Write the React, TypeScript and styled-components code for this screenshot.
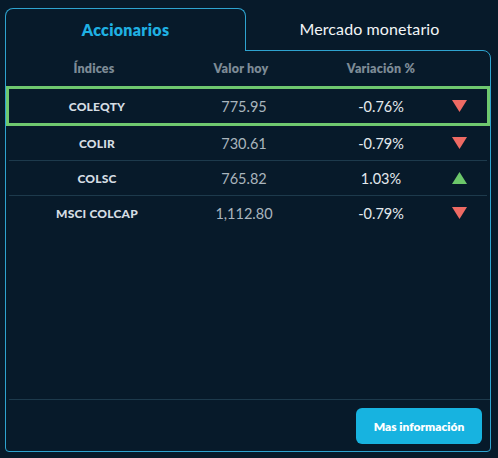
import React, { useState } from "react";
import styled, { createGlobalStyle } from "styled-components";

const GlobalStyle = createGlobalStyle`
  html, body {
    margin: 0;
    background: #071a2a;
  }
  body {
    font-family: "Lato", "Open Sans", sans-serif;
  }
`;

type Index = {
  name: string;
  value: string;
  change: string;
  up: boolean;
};

const indices: Index[] = [
  { name: "COLEQTY", value: "775.95", change: "-0.76%", up: false },
  { name: "COLIR", value: "730.61", change: "-0.79%", up: false },
  { name: "COLSC", value: "765.82", change: "1.03%", up: true },
  { name: "MSCI COLCAP", value: "1,112.80", change: "-0.79%", up: false },
];

function Arrow({ up }: { up: boolean }) {
  return (
    <svg width="15" height="12" viewBox="0 0 15 12">
      {up ? (
        <polygon points="7.5,0 15,12 0,12" fill="#6cc76a" />
      ) : (
        <polygon points="0,0 15,0 7.5,12" fill="#ee6a63" />
      )}
    </svg>
  );
}

function App() {
  const [activeTab, setActiveTab] = useState("acciones");
  const [selected, setSelected] = useState(0);

  return (
    <Page>
      <GlobalStyle />
      <Tabs>
        <Tab
          $active={activeTab == "acciones"}
          onClick={() => setActiveTab("acciones")}
        >
          Accionarios
        </Tab>
        <Tab
          $active={activeTab == "monetario"}
          onClick={() => setActiveTab("monetario")}
        >
          Mercado monetario
        </Tab>
      </Tabs>
      <Panel>
        <HeaderRow>
          <HeadCell>Índices</HeadCell>
          <HeadCell>Valor hoy</HeadCell>
          <HeadCell $pad>Variación %</HeadCell>
          <span />
        </HeaderRow>
        {indices.map((item, i) => (
          <Row
            key={item.name}
            $selected={i == selected}
            $last={i == indices.length - 1}
            onClick={() => setSelected(i)}
          >
            <Name>{item.name}</Name>
            <Value>{item.value}</Value>
            <Change>{item.change}</Change>
            <ArrowCell>
              <Arrow up={item.up} />
            </ArrowCell>
          </Row>
        ))}
        <Footer>
          <MoreButton>Mas información</MoreButton>
        </Footer>
      </Panel>
    </Page>
  );
}

const Page = styled.div`
  padding: 8px 0 0 5px;
  width: 486px;
`;

const Tabs = styled.div`
  display: flex;
  height: 42px;
`;

const Tab = styled.button<{ $active: boolean }>`
  position: relative;
  z-index: ${(p) => (p.$active ? 1 : 0)};
  width: ${(p) => (p.$active ? "241px" : "auto")};
  flex: ${(p) => (p.$active ? "none" : "1")};
  height: ${(p) => (p.$active ? "43px" : "42px")};
  margin: 0;
  padding: 0 0 1px ${(p) => (p.$active ? "0" : "2px")};
  background: ${(p) => (p.$active ? "#071a2a" : "transparent")};
  border: ${(p) => (p.$active ? "1px solid #2ea3cf" : "none")};
  border-bottom: none;
  border-radius: 8px 8px 0 0;
  font-family: "Lato", sans-serif;
  font-size: 16px;
  font-weight: ${(p) => (p.$active ? 800 : 400)};
  letter-spacing: ${(p) => (p.$active ? "0.3px" : "0.1px")};
  color: ${(p) => (p.$active ? "#1fb0e2" : "#f2f5f7")};
  cursor: pointer;
`;

const Panel = styled.div`
  height: 400px;
  border: 1px solid #2ea3cf;
  border-radius: 0 8px 4px 4px;
  display: flex;
  flex-direction: column;
`;

const grid = `
  display: grid;
  grid-template-columns: 176px 118px 120px 1fr;
  align-items: center;
  text-align: center;
`;

const HeaderRow = styled.div`
  ${grid}
  height: 35px;
`;

const HeadCell = styled.div<{ $pad?: boolean }>`
  font-size: 12.5px;
  font-weight: 800;
  letter-spacing: 0.2px;
  color: #7d8b96;
  padding-left: ${(p) => (p.$pad ? "42px" : "0")};
  white-space: nowrap;
`;

const Row = styled.div<{ $selected: boolean; $last: boolean }>`
  ${grid}
  height: 34px;
  border: ${(p) => (p.$selected ? "3px solid #6fc86f" : "none")};
  border-bottom: ${(p) =>
    p.$selected
      ? "3px solid #6fc86f"
      : p.$last
      ? "1px solid transparent"
      : "1px solid #1d3a4c"};
  margin: ${(p) => (p.$selected ? "0" : "0 3px")};
  cursor: pointer;
`;

const Name = styled.div`
  font-size: 12px;
  font-weight: 900;
  letter-spacing: 0.2px;
  color: #d5dde3;
`;

const Value = styled.div`
  font-size: 14.5px;
  color: #aab5bd;
`;

const Change = styled.div`
  font-size: 14.5px;
  color: #e4eaee;
  padding-left: 36px;
  white-space: nowrap;
`;

const ArrowCell = styled.div`
  display: flex;
  justify-content: flex-end;
  padding-right: 20px;
`;

const Footer = styled.div`
  margin-top: auto;
  margin-left: 3px;
  border-top: 1px solid #1d3a4c;
  display: flex;
  justify-content: flex-end;
  padding: 8px 8px 7px 0;
`;

const MoreButton = styled.button`
  width: 126px;
  height: 36px;
  border: none;
  border-radius: 6px;
  background: #17b3e0;
  color: #ffffff;
  font-family: "Lato", sans-serif;
  font-size: 12px;
  font-weight: 800;
  cursor: pointer;
`;

export default App;
